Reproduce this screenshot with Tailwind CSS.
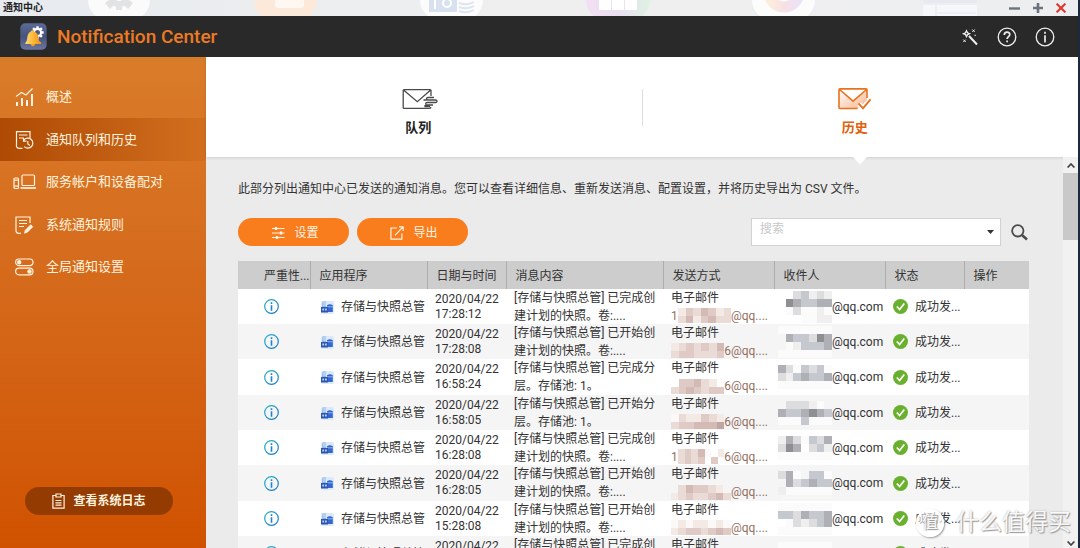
<!DOCTYPE html>
<html lang="zh-CN">
<head>
<meta charset="utf-8">
<meta name="viewport" content="width=device-width, initial-scale=1">
<title>Notification Center</title>
<script src="https://cdn.jsdelivr.net/npm/@tailwindcss/browser@4"></script>
</head>
<body class="relative flex h-screen flex-col overflow-hidden border-r-2 border-[#1c2a40] bg-[#ebebeb] font-[Roboto,'Noto_Sans_CJK_SC',sans-serif] text-xs text-[#333]">

<!-- Window title bar -->
<div class="relative flex h-4 shrink-0 items-center justify-between overflow-hidden bg-linear-to-r from-[#e7ebef] via-[#efefef] to-[#edeef0] pl-[3px] pr-3">
  <svg class="absolute left-0 top-0 h-4 w-[1078px]" viewBox="0 0 1078 16" aria-hidden="true">
    <defs>
      <linearGradient id="tiles"><stop offset="0" stop-color="#f3dff3"/><stop offset=".5" stop-color="#eadff2"/><stop offset="1" stop-color="#def2e2"/></linearGradient>
      <linearGradient id="ring"><stop offset="0" stop-color="#fbeedd"/><stop offset=".5" stop-color="#f8e0e4"/><stop offset="1" stop-color="#ece2f8"/></linearGradient>
      <linearGradient id="info" x2="1" y2="1"><stop stop-color="#2ab3c9"/><stop offset="1" stop-color="#1672d2"/></linearGradient>
    </defs>
    <rect x="88" y="-40" width="62" height="60" rx="20" fill="#fbfbfc"/>
    <g fill="#e2e3e5"><circle cx="119" cy="-4" r="11"/><path d="M116 5h6v5h-6zM105 3l4-3 5 5-4 4zM133 3l-4-3-5 5 4 4z"/></g>
    <circle cx="119" cy="-3" r="4" fill="#fbfbfc"/>
    <rect x="254" y="-40" width="63" height="60" rx="20" fill="#fce9da"/>
    <rect x="275" y="-10" width="29" height="18" rx="3" fill="#fff8f2"/>
    <rect x="420" y="-40" width="63" height="60" rx="20" fill="#fcfcfd"/>
    <path d="M429-4h28v16h-28z" fill="#d8e1f0"/><path d="M435 0v9" stroke="#fff" stroke-width="2"/><circle cx="447" cy="3" r="4" fill="none" stroke="#fff" stroke-width="2"/>
    <path d="M459 3q8 3 15-1M459 7q8 3 15-1M459 11q8 3 15-1" stroke="#dde5f2" stroke-width="2" fill="none"/>
    <rect x="586" y="-40" width="64" height="60" rx="20" fill="url(#tiles)"/>
    <path d="M599-4h12v14h-12zM612-4h12v14h-12zM625-4h12v14h-12z" fill="#fff"/>
    <rect x="752" y="-40" width="63" height="60" rx="20" fill="#fcfcfd"/>
    <circle cx="784" cy="-8" r="15" fill="none" stroke="url(#ring)" stroke-width="11"/>
    <rect x="923" y="-6" width="54" height="9" rx="2" fill="#e6eaf0"/>
    <rect x="923" y="5" width="54" height="12" rx="2" fill="#f5f7fa"/><path d="M936 5v11M937 13h39" stroke="#e3e7ee"/>
  </svg>
  <span class="relative text-[10px] leading-3 font-bold text-[#222]">通知中心</span>
  <div class="relative flex items-center gap-[13px]">
    <button aria-label="最小化"><svg class="block size-[11px]" viewBox="0 0 11 11"><path d="M0 5.5h11" stroke="#6d737c" stroke-width="2.4"/></svg></button>
    <button aria-label="最大化"><svg class="block size-[10px]" viewBox="0 0 10 10"><path d="M0 5h10M5 0v10" stroke="#6d737c" stroke-width="2.6"/></svg></button>
    <button aria-label="关闭"><svg class="block size-[10px]" viewBox="0 0 10 10"><path d="M.6.6l8.8 8.8M9.4.6L.6 9.4" stroke="#e03428" stroke-width="2"/></svg></button>
  </div>
</div>

<!-- Application header -->
<header class="flex h-[41px] shrink-0 items-center bg-[#292929] pl-5 pr-[23px]">
  <svg class="size-[27px]" viewBox="0 0 27 27" aria-hidden="true">
    <defs>
      <linearGradient id="lg" x2="0" y2="1"><stop stop-color="#5b6b96"/><stop offset=".5" stop-color="#46537b"/><stop offset="1" stop-color="#6a769c"/></linearGradient>
      <linearGradient id="bell" x2="1"><stop stop-color="#ffd97a"/><stop offset=".5" stop-color="#fcb738"/><stop offset="1" stop-color="#f08f12"/></linearGradient>
    </defs>
    <rect x=".3" y=".3" width="26.4" height="26.4" rx="5" fill="url(#lg)"/>
    <g transform="translate(17.500 9.500)"><circle r="3.600" fill="none" stroke="#fff" stroke-width="2.200"/><path d="M0-6.200V-4M0 4v2.200M-6.200 0H-4M4 0h2.200M-4.400-4.400l1.600 1.600M2.800 2.800l1.600 1.600M-4.400 4.400l1.600-1.600M2.800-2.800l1.600-1.600" stroke="#fff" stroke-width="2.400"/></g>
    <path d="M11.500 7.500c1.300-.6 2.600.2 2.800 1.200 3 1 4.400 3.300 4.200 6.300-.1 2.300 1 3.500 2.600 4.600.5.500.3 1.500-.5 1.500H6.500c-1.300 0-1.600-1-.7-1.800 1.500-1.500 1.300-3.500 1.600-5.500.4-2.600 1.600-4.400 3.400-5.200z" fill="url(#bell)"/>
    <path d="M10.500 21.100h4.600c-.2 2.800-4.200 2.800-4.600 0z" fill="#f5a120"/>
  </svg>
  <h1 class="ml-[10px] text-[19px] font-medium text-[#ee7a24]">Notification Center</h1>
  <div class="ml-auto flex items-center gap-[18px] text-[#eee]">
    <button aria-label="向导"><svg class="block size-[18px]" viewBox="0 0 18 18" fill="none" stroke="currentColor"><path d="M8 8l8 8.500" stroke-width="2"/><path d="M5.500 2.800l1 2 2 .9-2 .9-1 2-1-2-2-.9 2-.9z" stroke-width="1.300"/><path d="M11.300 1.500l2.400 2.400M13.700 1.500l-2.400 2.400M2.300 11.600l2.400 2.400M4.700 11.600l-2.400 2.400M13.500 7.300h1.400"/></svg></button>
    <button aria-label="帮助"><svg class="block size-5" viewBox="0 0 20 20" fill="none" stroke="currentColor"><circle cx="10" cy="10" r="8.800" stroke-width="1.300"/><path d="M7.300 8c0-3.800 5.500-3.600 5.500-.5 0 2-2.700 2.200-2.700 4.500" stroke-width="1.700"/><path d="M10.100 13.500v1.800" stroke-width="1.700"/></svg></button>
    <button aria-label="关于"><svg class="block size-5" viewBox="0 0 20 20" fill="none" stroke="currentColor"><circle cx="10" cy="10" r="8.800" stroke-width="1.300"/><path d="M10 8.200v7.200M10 4.800v1.900" stroke-width="1.700"/></svg></button>
  </div>
</header>

<div class="flex min-h-0 flex-1">
  <!-- Sidebar -->
  <aside class="flex w-[206px] shrink-0 flex-col bg-linear-to-b from-[#d97c2a] to-[#d05200] pt-[18px] text-[#fff3df]">
    <nav class="flex flex-col text-[13px]">
      <a href="#" class="flex h-[43px] items-center gap-[10px] pl-[13px]">
        <svg class="h-5 w-[23px]" viewBox="0 0 23 20" fill="none" stroke="currentColor"><path d="M4 15v4M9 11v8M14 13v6M19 7v12" stroke-width="2"/><path d="M3 9.500l5.500-4 4.500 2.500L19.500 1.500" stroke-width="1.100"/></svg>概述</a>
      <a href="#" aria-current="page" class="flex h-[43px] items-center gap-[10px] bg-linear-to-r from-[#ae4a03] to-[#d26f1e] pl-[13px]">
        <svg class="h-5 w-[23px]" viewBox="0 0 23 20" fill="none" stroke="currentColor" stroke-width="1.200"><path d="M17 8V1.600H3.500v12.600c-.6 2.800.8 4.200 3 4.200h3M6 5h8.500M6 8h5"/><path d="M10.800 10.200a5 5 0 1 1 .5 6.500M10.500 8v3.200h3M14.800 11v3l2 1.500"/></svg>通知队列和历史</a>
      <a href="#" class="flex h-[42px] items-center gap-[10px] pl-[13px]">
        <svg class="h-5 w-[23px]" viewBox="0 0 23 20" fill="none" stroke="currentColor" stroke-width="1.200"><rect x="1" y="6" width="4.500" height="10.500" rx="1"/><path d="M1 8.200h4.500M1 14.200h4.500"/><rect x="9" y="3" width="12.500" height="10.500" rx="1"/><path d="M7.500 16h15.500" stroke-width="1.700"/></svg>服务帐户和设备配对</a>
      <a href="#" class="flex h-[43px] items-center gap-[10px] pl-[13px]">
        <svg class="h-5 w-[23px]" viewBox="0 0 23 20" fill="none" stroke="currentColor" stroke-width="1.200"><path d="M17 8V2H3v12.500c-.3 2.500.8 3.800 3 3.800h2M6 5.500h8M6 8.500h8M6 11.500h5"/><path d="M11.500 18.200l.8-3 5.500-5.500 2 2-5.500 5.500z" fill="currentColor" stroke-width=".8"/></svg>系统通知规则</a>
      <a href="#" class="flex h-[42px] items-center gap-[10px] pl-[13px]">
        <svg class="h-5 w-[23px]" viewBox="0 0 23 20" fill="none" stroke="currentColor" stroke-width="1.200"><rect x="2.600" y="2" width="17.400" height="6.600" rx="3.300"/><rect x="2.600" y="11.200" width="17.400" height="6.600" rx="3.300"/><circle cx="6.200" cy="5.300" r="1.600" fill="currentColor"/><circle cx="16.500" cy="14.500" r="1.600" fill="currentColor"/></svg>全局通知设置</a>
    </nav>
    <button class="mt-auto mb-[33px] ml-[25px] flex h-7 w-[148px] items-center justify-center gap-2 rounded-full bg-[#943b02] font-bold">
      <svg class="h-4 w-[13px]" viewBox="0 0 13 16" fill="none" stroke="currentColor" stroke-width="1.200"><path d="M4 2.500H.9v12.600h11.200V2.500H9M4 1h5v3H4zM3.500 7.500h6M3.500 9.800h6M3.500 12.100h6"/></svg>查看系统日志</button>
  </aside>

  <main class="flex min-w-0 flex-1 flex-col">
    <!-- Tabs -->
    <div class="flex h-[100px] shrink-0 items-center bg-white shadow-[0_1px_3px_rgba(0,0,0,0.12)]" role="tablist">
      <button role="tab" aria-selected="false" class="flex h-full flex-1 flex-col items-center gap-2 pt-[31px] pr-[11px] text-[13px] leading-5 font-bold text-[#222]">
        <svg class="-mr-1 h-[22px] w-9" viewBox="0 0 36 22" fill="none" stroke="#4a4a4a" stroke-width="1.300"><path d="M29 8V2.600q0-1-1-1H2.200q-1 0-1 1v16.800q0 1 1 1H27q1.600 0 2-1.400M1.500 2l13.800 11.700L28.700 2"/><path d="M32 9.500h-6q-1.500 0-1.500 1.300T26 12h7.500q1.500 0 1.500 1.200t-1.500 1.300H25q-1.300 0-1.300 1.200T25 17h6M24.500 12h-3M23 17v1.500h5" /></svg>队列</button>
      <div class="h-[37px] w-px bg-[#ddd]"></div>
      <button role="tab" aria-selected="true" class="relative flex h-full flex-1 flex-col items-center gap-2 pt-[31px] pr-[11px] text-[13px] leading-5 font-bold text-[#e2600c]">
        <svg class="h-[22px] w-[33px]" viewBox="0 0 33 22" fill="none" stroke="#e8721f" stroke-width="1.600">
          <defs><linearGradient id="env" x2="1" y2="1"><stop stop-color="#fff"/><stop offset="1" stop-color="#f6b48c"/></linearGradient></defs>
          <path d="M1 2v17.500q0 1 1 1h18l9-8V2L15.300 12.800z" fill="url(#env)" stroke="none"/>
          <path d="M29 10V1.900q0-1-1-1H2q-1 0-1 1v17.600q0 1 1 1h17.500M1.500 1.500l13.600 11.700L28.500 1.500"/>
          <path d="M21 16l4 4.500 7.500-9" stroke="#fff" stroke-width="5"/><path d="M20.500 15.500l4.500 4.800 7.500-9" stroke-width="1.900"/></svg>历史
        <svg class="absolute top-full left-1/2 h-2 w-4 -translate-x-1/2" viewBox="0 0 16 8" aria-hidden="true"><path d="M1 0h14L8 7.500z" fill="#fff"/></svg>
      </button>
    </div>

    <div class="flex min-h-0 flex-1">
      <section class="min-w-0 flex-1 overflow-hidden pt-[22px] pr-[34px] pl-8">
        <p class="leading-5 whitespace-nowrap">此部分列出通知中心已发送的通知消息。您可以查看详细信息、重新发送消息、配置设置，并将历史导出为 CSV 文件。</p>
        <div class="mt-[19px] flex h-7 items-center gap-2 text-[#fff3e2]">
          <button class="flex h-7 w-[111px] items-center justify-center gap-[9px] rounded-full bg-[#f97c1d] pt-px pl-[3px]">
            <svg class="size-[14px]" viewBox="0 0 14 14" fill="none" stroke="currentColor" stroke-width="1.200"><path d="M1 2.500h12.500M1 7h12.500M1 11.500h12.500"/><path d="M5 1v3M10 5.500v3M6 10v3" stroke-width="2.400"/></svg>设置</button>
          <button class="flex h-7 w-[111px] items-center justify-center gap-[9px] rounded-full bg-[#f97c1d] pt-px pl-[3px]">
            <svg class="size-[14px]" viewBox="0 0 14 14" fill="none" stroke="currentColor" stroke-width="1.200"><path d="M7 2H.9v11.200h11V7.500M5 9.300L13 .9M9 .8h4.200V5"/></svg>导出</button>
          <div class="ml-auto flex h-7 w-[250px] border border-[#d2d2d2] bg-white">
            <input type="text" aria-label="搜索" placeholder="搜索" class="min-w-0 flex-1 pb-1.5 pl-2 text-[#333] outline-none placeholder:text-[#c8c8c8]">
            <button aria-label="展开" class="flex w-[19px] items-center justify-center"><svg class="h-1 w-[7px]" viewBox="0 0 7 4"><path d="M0 0h7L3.500 4z" fill="#333"/></svg></button>
          </div>
          <button aria-label="开始搜索" class="flex w-5 justify-center"><svg class="size-[17px]" viewBox="0 0 17 17" fill="none" stroke="#4a4a4a"><circle cx="6.800" cy="6.800" r="5.700" stroke-width="1.800"/><path d="M11.200 11.200l4.800 4.300" stroke-width="2.600"/></svg></button>
        </div>

        <table class="mt-[15px] w-full table-fixed border-collapse">
          <colgroup><col class="w-[72px]"><col class="w-[117px]"><col class="w-[79px]"><col><col class="w-[111px]"><col class="w-[111px]"><col class="w-[79px]"><col class="w-[65px]"></colgroup>
          <thead class="bg-[#cdcdcd] text-left">
            <tr class="h-[28px] *:border-r *:border-[#adadad] *:p-0 *:pt-px *:pl-[9px] *:font-normal *:whitespace-nowrap *:last:border-r-0">
              <th scope="col"><span class="pl-[17px]">严重性...</span></th><th scope="col">应用程序</th><th scope="col">日期与时间</th><th scope="col">消息内容</th><th scope="col">发送方式</th><th scope="col">收件人</th><th scope="col">状态</th><th scope="col">操作</th>
            </tr>
          </thead>
          <tbody id="history"></tbody>
        </table>
      </section>

      <!-- Scrollbar -->
      <div class="flex w-[15px] shrink-0 flex-col items-center bg-[#f1f1f1] py-[6px]" aria-hidden="true">
        <svg class="h-[5px] w-2" viewBox="0 0 8 5" fill="none" stroke="#444" stroke-width="1.700"><path d="M.6 4.500L4 1l3.400 3.500"/></svg>
        <div class="mt-[5px] h-[67px] w-full bg-[#c9c9c9]"></div>
        <svg class="mt-auto -mb-1 h-[5px] w-2" viewBox="0 0 8 5" fill="none" stroke="#444" stroke-width="1.700"><path d="M.6.500L4 4 7.400.500"/></svg>
      </div>
    </div>
  </main>
</div>

<!-- Watermark -->
<div class="pointer-events-none absolute right-[7px] bottom-[9px] flex items-center gap-3 text-[23px] leading-8 text-white/90 [text-shadow:1px_1px_1px_#999,0_0_2px_#aaa]">
  <span class="flex size-[28px] items-center justify-center rounded-full border-2 border-white bg-white/60 text-base shadow-[1px_1px_2px_#999]">值</span>
  <span>什么值得买</span>
</div>

<script>
  // Each mosaic is a list of pixel rows; "." is transparent, letters index the palette.
  const gray = { a: '#8f8f93', b: '#aeb0b5', c: '#c6c8cf', d: '#dddde0', e: '#efeff0', w: '#fbfbfb' };
  const warm = { a: '#bfa6a3', b: '#d3bab5', c: '#dfcac6', d: '#eadbd6', e: '#f3eae6', w: '#fbf8f7' };
  const rows = [
    ['17:28:12', '已完成创', '建计划的快照。卷:....', '1', '@qq....', ['ecdbced', 'dbecbdd'], ['..dcede', '.abccbb', '.wdwwew', '...wwee']],
    ['17:28:08', '已开始创', '建计划的快照。卷:....', '', '6@qq....', ['edcdcdb', 'dccdddc'], ['wwwwwww', '.bccdab', '.wecccb', 'wwwwwww']],
    ['16:58:24', '已完成分', '层。存储池: 1。', '', '6@qq....', ['.ccbde.', 'dcbcdcc'], ['bdwcdcw', 'decbccb', 'wwwwwww']],
    ['16:58:05', '已开始分', '层。存储池: 1。', '', '6@qq....', ['wdeecde', 'dccbbba'], ['.dddew.', 'bccbabc', 'wwwcwww']],
    ['16:28:08', '已完成创', '建计划的快照。卷:....', '1', '6@qq....', ['dcdbw.e', 'dcdc.c.'], ['ebdwcdb', 'dab.dce', 'wwwwwww']],
    ['16:28:05', '已开始创', '建计划的快照。卷:....', '', '@qq....', ['.dbccde.', 'edcddcbd'], ['dbw.ccw', '.bdcbcc', 'ewwwwww']],
    ['15:28:08', '已开始创', '建计划的快照。卷:....', '', '@qq....', ['weweewew', 'edccdcbc'], ['wwwwwww', 'ccdbccb', '.wdedcb', 'wwwwwww']],
    ['15:28:05', '已完成创', '建计划的快照。卷:....', '', '@qq....', ['edeedede', 'dccdcbca'], ['wwwwwww', 'ccdbccb', '.wdedcb']]
  ];
  const mosaic = (grid, palette, cls) => {
    const cells = grid.map((line, y) => [...line].map((c, x) =>
      c === '.' ? '' : `<rect x="${x}" y="${y}" width="1" height="1" fill="${palette[c]}"/>`).join('')).join('');
    return `<svg class="${cls}" viewBox="0 0 ${grid[0].length} ${grid.length}" preserveAspectRatio="none" shape-rendering="crispEdges" aria-hidden="true">${cells}</svg>`;
  };
  document.getElementById('history').innerHTML = rows.map(([time, verb, rest, lead, tail, m1, m2]) => `
    <tr class="h-[35px] bg-white even:bg-[#f5f5f5] nth-[3n]:h-9 *:p-0 *:pl-2 *:whitespace-nowrap">
      <td><svg class="ml-[18px] block size-[15px]" viewBox="0 0 15 15" fill="none" stroke="#1a84cf" role="img" aria-label="信息"><circle cx="7.500" cy="7.500" r="6.800" stroke="url(#info)" stroke-width="1.200"/><path d="M7.500 6.200v5.600M7.500 3.300V5" stroke-width="1.600"/></svg></td>
      <td><div class="ml-0.5 flex items-center gap-[7px]"><svg class="size-[14px] shrink-0" viewBox="0 0 14 14" aria-hidden="true"><rect x="1" y="1" width="13" height="13" rx="2" fill="#dbe9fa"/><path d="M2.500 1.500h3.500V7H2z" fill="#8fb6ea"/><path d="M3 3h3M3 5h3" stroke="#fff" stroke-width=".7"/><path d="M7 5.200q2.800-1.800 5.800 0V12H7z" fill="#3467cf"/><path d="M7 6.800h5.800" stroke="#9fc0f4" stroke-width=".9"/><path d="M1 7h7v5.500H1z" fill="#2c55b0"/><path d="M2.300 8.600h1.800v2H2.300zM5 8.600h1.800v2H5z" fill="#b9d0f5"/></svg><span class="pt-px">存储与快照总管</span></div></td>
      <td class="leading-[15px]">2020/04/22<br>${time}</td>
      <td><div class="-my-1 leading-[18px]">[存储与快照总管] ${verb}<br>${rest}</div></td>
      <td><div class="-my-1 leading-[18px]">电子邮件<div class="flex h-[18px] w-[97px] items-center text-[#946f60]">${lead}${mosaic(m1, warm, 'h-[15px] min-w-0 flex-1')}${tail}</div></div></td>
      <td><div class="-ml-1 flex items-center">${mosaic(m2, gray, m2.length === 4 ? 'h-8 w-[54px] shrink-0' : 'h-6 w-[54px] shrink-0')}@qq.com</div></td>
      <td><div class="flex items-center gap-[7px]"><svg class="size-[15px] shrink-0" viewBox="0 0 15 15" fill="none" role="img" aria-label="成功"><circle cx="7.500" cy="7.500" r="7.500" fill="#6ab02f"/><path d="M3.800 7.500l2.800 3 4.700-6" stroke="#fff" stroke-width="1.700"/></svg><span class="pt-px">成功发...</span></div></td>
      <td></td>
    </tr>`).join('');
</script>
</body>
</html>
